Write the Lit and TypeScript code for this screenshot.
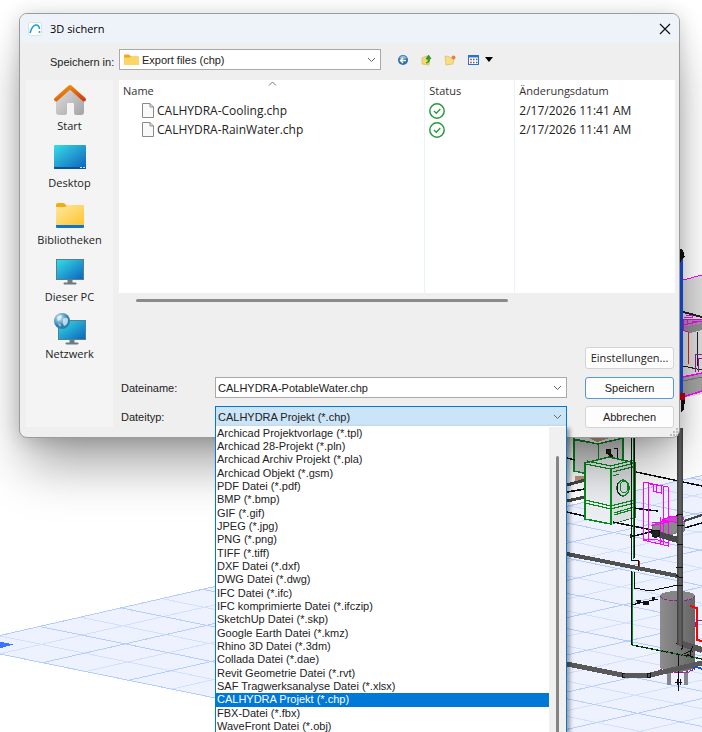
import { LitElement, html, svg, css } from "lit";
import { customElement, state } from "lit/decorators.js";

const FILE_TYPES = [
  "Archicad Projektvorlage (*.tpl)",
  "Archicad 28-Projekt (*.pln)",
  "Archicad Archiv Projekt (*.pla)",
  "Archicad Objekt (*.gsm)",
  "PDF Datei (*.pdf)",
  "BMP (*.bmp)",
  "GIF (*.gif)",
  "JPEG (*.jpg)",
  "PNG (*.png)",
  "TIFF (*.tiff)",
  "DXF Datei (*.dxf)",
  "DWG Datei (*.dwg)",
  "IFC Datei (*.ifc)",
  "IFC komprimierte Datei (*.ifczip)",
  "SketchUp Datei (*.skp)",
  "Google Earth Datei (*.kmz)",
  "Rhino 3D Datei (*.3dm)",
  "Collada Datei (*.dae)",
  "Revit Geometrie Datei (*.rvt)",
  "SAF Tragwerksanalyse Datei (*.xlsx)",
  "CALHYDRA Projekt (*.chp)",
  "FBX-Datei (*.fbx)",
  "WaveFront Datei (*.obj)",
];

const FILES = [
  { name: "CALHYDRA-Cooling.chp", date: "2/17/2026 11:41 AM" },
  { name: "CALHYDRA-RainWater.chp", date: "2/17/2026 11:41 AM" },
];

/* 3D view behind the dialog: floor grid and piping */
@customElement("model-view")
export class ModelView extends LitElement {
  static styles = css`
    :host { display: block; }
    .canvas { display: block; width: 100%; height: 100%; }
  `;

  private grid() {
    const top = (x: number) => 635.5 - 0.228 * x;
    const bottom = (x: number) => 653.8 + 0.205 * x;
    const lines = [];
    for (let i = 0; i < 19; i++) {
      const x = -1 + 40.7 * i;
      lines.push({ strong: i % 2 === 1, d: `M${x} ${top(x)}L${x + 800} ${top(x) + 0.204 * 800}` });
    }
    for (let i = 0; i < 28; i++) {
      const x = 43 * i;
      lines.push({ strong: i % 2 === 1, d: `M${x} ${bottom(x)}L${x + 800} ${bottom(x) - 0.228 * 800}` });
    }
    return [...lines.filter((l) => !l.strong), ...lines.filter((l) => l.strong)].map(
      (l) => svg`<path d=${l.d} stroke=${l.strong ? "#b4cdfb" : "#d3dffb"}/>`
    );
  }

  render() {
    return html`<svg class="canvas" viewBox="0 0 702 732" preserveAspectRatio="xMinYMin slice" fill="none" shape-rendering="crispEdges" aria-hidden="true">
      <defs>
        <linearGradient id="tank" x1="0" x2="1"><stop offset="0" stop-color="#8d8d8d"/><stop offset=".35" stop-color="#808080"/><stop offset="1" stop-color="#666"/></linearGradient>
        <linearGradient id="pipe" x1="0" x2="1"><stop offset="0" stop-color="#3e3e3e"/><stop offset=".5" stop-color="#666"/><stop offset="1" stop-color="#404040"/></linearGradient>
      </defs>
      <path d="M-44 645.5L702 475.5V797Z" fill="#eef2fe"/>
      <clipPath id="floor"><path d="M-45 645.5L702 475V798Z"/></clipPath>
      <g clip-path="url(#floor)">${this.grid()}</g>
      <path d="M-44 645.5L702 475.5M-44 645L702 797.5" stroke="#b4cdfb"/>
      <path d="M0 642h4v1h5v1h4v1h-3v1h-4v1h-3v1h-3z" fill="#3d74ff"/>

      <!-- upper right fixtures -->
      <path d="M683 280L702 275V394L683 398Z" fill="#dcdcdc"/>
      <path d="M683 280L702 275" stroke="#f0f"/>
      <path d="M683 312L702 317" stroke="#222" stroke-width="2"/>
      <path d="M683 320L702 319V327L690 333L683 330Z" fill="#c77ac7" stroke="#c218c2"/>
      <path d="M684 317h8v-2h-6M687 320v4M692 321l10 1M683 325l19-4" stroke="#c2c"/>
      <path d="M683 327L702 323V330L690 333Z" fill="#8e8e8e"/>
      <path d="M688.500 333V364" stroke="#c22"/>
      <path d="M697.500 332V366M683 366L702 370" stroke="#222"/>
      <path d="M695.500 372V354H702M698.500 372V358H702" stroke="#8b1f8b"/>
      <path d="M683 377L702 373V391L683 398Z" fill="#a3a3a3"/>
      <path d="M683 377L702 373M683 397L702 391" stroke="#f0f" stroke-width="1.500"/>
      <path d="M683 381L702 377" stroke="#777"/>
      <rect x="680" y="256" width="3" height="138" fill="#1852e6"/>
      <path d="M680 249l3 1 1 4 1 3-3 2-2 4zM681 400h4l-1 9-3 4z" fill="#111"/>
      <rect x="680" y="393" width="5" height="7" fill="#c00014"/>

      <!-- appliances -->
      <path d="M574 439L598 444L623 438V470L598 476L574 471Z" fill="#d2d2d2" stroke="#078a1f" stroke-width="1.500"/>
      <path d="M585 436L598 432L612 437L597 442Z" fill="#c2a58c"/>
      <path d="M598 444V476M574 440L598 444L623 438" stroke="#078a1f"/>
      <path d="M575 476h9v5h-9z" fill="#bd9878"/>
      <path d="M606 449h4v3l3 5h-2l-3-4h-2z" stroke="#111" fill="#222"/>
      <path d="M614 448H617.500V459" stroke="#111"/>
      <path d="M567 458L575 460M567 492L585 489M567 512L584 516M584.500 478V516" stroke="#111" stroke-width="1.500"/>
      <path d="M567 485L585 480M567 501L585 497" stroke="#444" stroke-width="3"/>
      <path d="M585 463L609 457L635 463V517L611 524L585 519Z" fill="#eceef1" stroke="#078a1f" stroke-width="1.500"/>
      <path d="M611 469L635 463V517L611 524Z" fill="#dcdee2"/>
      <path d="M585 464L611 469L635 463M587 461L611 466L634 460M611 469V524M585 500L611 506L635 500M585 503L611 509L635 503M613 472L633 467M613 476l6-2M614 515L631 510M614 513L634 507" stroke="#078a1f" stroke-width="1.200"/>
      <ellipse cx="623" cy="488" rx="6" ry="8" stroke="#078a1f" stroke-width="1.500"/>
      <ellipse cx="624" cy="487" rx="4" ry="6" stroke="#078a1f"/>
      <path d="M618 483l-1 8 4 5" stroke="#111"/>

      <!-- supply lines -->
      <path d="M636 472L702 486M613 522L652 530M634 508L648 510L658 511M634 536L654 531M684 528L702 523" stroke="#111" stroke-width="1.500"/>
      <path d="M684 521L702 515" stroke="#444" stroke-width="2.500"/>
      <path d="M631.500 438V560H638V571M634.500 438V558M631.500 571V645" stroke="#111"/>
      <path d="M633 438V559M632.500 572V645" stroke="#078a1f"/>
      <path d="M639.500 561V568" stroke="#c22"/>
      <path d="M567 554L678 576" stroke="#505050" stroke-width="4"/>
      <path d="M652 525L669 519L684 522V531L665 536L652 533Z" fill="#8a8a8a" stroke="#777"/>
      <path d="M643 482L668 487V546L643 540ZM648.500 482V542M663.500 486V545M643 540L655 539L668 543M653 484l8 2v7l-8-2zM656 485v7l5 1M650 484h5M660 517V545M652 523L684 519M651 526L680 519L684 522" stroke="#f0f"/>
      <path d="M662 520L672 516L684 518L680 523Z" fill="#c94ac9" stroke="#f0f"/>
      <path d="M654 533L678 540" stroke="#484848" stroke-width="6"/>
      <path d="M651 532l3-2h5l1 5-4 3-4-2M630 534l4 2-4 2" stroke="#111" fill="#222"/>

      <!-- tank -->
      <path d="M660 597V668Q677 676 695 668V597Z" fill="url(#tank)"/>
      <ellipse cx="677.500" cy="596" rx="17.500" ry="5" fill="#858585"/>
      <path d="M660 596Q663 601 677 601T695 596M660 669Q677 677 695 669" stroke="#a0149a" stroke-dasharray="4 1"/>
      <path d="M667 673h4v12h-4zM684 673h4v12h-4z" fill="#858590"/>
      <path d="M666 672h6M683 672h6" stroke="#8b3f98"/>
      <path d="M678.500 655V691M675 682h7M677 679v6M680 679v6" stroke="#111"/>
      <path d="M690 606L697 608V640L702 641" stroke="#f00" stroke-width="2"/>
      <path d="M702 620h-4l-3 4v3" stroke="#8b1f8b"/>
      <path d="M634.500 572V588L650 591L678 585M631 605L658 599" stroke="#111"/>
      <path d="M636 600h5l-2 4zM643 601h5l1 3-6 1zM652 597h3l-2 4z" fill="#111" stroke="#111"/>
      <path d="M632 645L702 659" stroke="#111" stroke-width="1.500"/>
      <path d="M632 645L702 659" stroke="#078a1f" stroke-dasharray="4 3"/>
      <path d="M567 664L622 675H650L702 663" stroke="#595959" stroke-width="5"/>
      <path d="M625 673h-3v4h3M647 673h3v4h-3zM684 654l6-3v5l-3-2" stroke="#111"/>
      <path d="M680 643L702 650" stroke="#555" stroke-width="6"/>
      <path d="M676 643h5l2 4-2 3M693 646l-2 4 2 2" stroke="#111"/>
      <path d="M693 668l4-1 5 2" stroke="#1652d8" stroke-width="2"/>
      <rect x="677" y="428" width="6" height="217" fill="url(#pipe)"/>
      <path d="M676 516l3-2 4 1M684 525l-7 1M677 545l6-1M676 567l7 1M676 575l3 2h4M677 585h6" stroke="#111"/>
    </svg>`;
  }
}

const chevron = html`<svg class="chevron" viewBox="0 0 9 6" aria-hidden="true"><path d="M1 1L4.500 4.500L8 1" fill="none" stroke="#666"/></svg>`;

const folder = svg`
  <path d="M0 1.500Q0 .5 1 .5H5L7 2.500H14Q15 2.500 15 3.500V10Q15 11 14 11H1Q0 11 0 10Z" fill="#eea91c"/>
  <path d="M0 4.500Q0 3.500 1 3.500H5.500L7.500 2.500H14Q15 2.500 15 3.500V10Q15 11 14 11H1Q0 11 0 10Z" fill="#fdd466"/>`;

const PLACES = [
  {
    label: "Start",
    icon: svg`<defs><linearGradient id="wall" x2="1" y2="1"><stop stop-color="#e2e2e2"/><stop offset="1" stop-color="#a3a3a3"/></linearGradient><linearGradient id="roof" x2="1" y2="1"><stop stop-color="#f59a11"/><stop offset="1" stop-color="#d43c08"/></linearGradient></defs>
      <path d="M2 15L16 2L30 15V28Q30 31 27 31H22Q20 31 20 29V20Q20 19 19 19H14Q13 19 13 20V29Q13 31 11 31H5Q2 31 2 28Z" fill="url(#wall)"/>
      <path d="M2 15.500L16 3L30 15.500" fill="none" stroke="url(#roof)" stroke-width="4" stroke-linecap="round" stroke-linejoin="round"/>`,
  },
  {
    label: "Desktop",
    icon: svg`<defs><linearGradient id="screen" x2="1" y2="1"><stop stop-color="#36dfe6"/><stop offset=".5" stop-color="#239dd2"/><stop offset="1" stop-color="#0b63bd"/></linearGradient></defs>
      <rect y="4" width="32" height="24" rx="1" fill="url(#screen)"/><path d="M0 26H32V27Q32 28 31 28H1Q0 28 0 27Z" fill="#0a5495"/><path d="M26 26.500h2m1 0h2" stroke="#cfe4f5"/>`,
  },
  {
    label: "Bibliotheken",
    icon: svg`<defs><linearGradient id="lib" x2="1" y2="1"><stop stop-color="#ffe8a0"/><stop offset="1" stop-color="#fdc52e"/></linearGradient></defs>
      <path d="M2 7Q2 5 4 5H10L13 8H29Q30 8 30 9V14H2Z" fill="#f0ab16"/><path d="M2 9H11L14 7H29Q30 7 30 8V27H2Z" fill="url(#lib)"/><path d="M2 27H30V29Q30 30 29 30H3Q2 30 2 29Z" fill="#0f74cf"/>`,
  },
  {
    label: "Dieser PC",
    icon: svg`<defs><linearGradient id="pc" x2="1" y2="1"><stop stop-color="#36dfe6"/><stop offset="1" stop-color="#0b63bd"/></linearGradient></defs>
      <path d="M14 24H18V28H22V29H10V28H14Z" fill="#6d7a84" stroke="#6d7a84"/><rect x="2.500" y="4.500" width="27" height="20" fill="url(#pc)" stroke="#57808f"/>`,
  },
  {
    label: "Netzwerk",
    icon: svg`<defs><linearGradient id="net" x2="1" y2="1"><stop stop-color="#36dfe6"/><stop offset="1" stop-color="#0b63bd"/></linearGradient><radialGradient id="globe" cx=".35" cy=".3"><stop stop-color="#d5ecf6"/><stop offset="1" stop-color="#2b7fae"/></radialGradient></defs>
      <path d="M16 28H20V31H24V32H12V31H16Z" fill="#6d7a84" stroke="#6d7a84"/><rect x="4.500" y="8.500" width="27" height="19" fill="url(#net)" stroke="#57808f"/>
      <circle cx="8" cy="9" r="8" fill="url(#globe)"/><path d="M3 5Q6 2 8 4Q7 8 4 9ZM9 7Q14 4 14 8Q14 13 10 14Q8 11 9 7ZM4 11l3 2-1 2Z" fill="#e6f3f8" opacity=".75"/>`,
  },
];

@customElement("app-root")
export class AppRoot extends LitElement {
  @state() private fileType = "CALHYDRA Projekt (*.chp)";
  @state() private fileName = "CALHYDRA-PotableWater.chp";

  static styles = css`
    :host {
      display: block;
      position: relative;
      box-sizing: border-box;
      height: 100vh;
      padding: 13px 22px 0 19px;
      overflow: hidden;
      background: #fff;
      color: #222;
      font: 12px/16px "Open Sans", "Noto Sans", sans-serif;
    }
    * { box-sizing: border-box; }
    button, input, select { font: inherit; color: inherit; margin: 0; }
    button { padding: 0; border: 0; background: none; }
    svg { display: block; flex: none; }
    .scene { position: absolute; inset: 0; }
    .dialog {
      position: relative;
      border: 1px solid #9b9b9b;
      border-radius: 8px;
      background: #efefef;
      box-shadow: 0 34px 48px -8px rgba(0, 0, 0, 0.36), 0 2px 20px rgba(0, 0, 0, 0.18);
    }
    .titlebar {
      display: flex;
      align-items: center;
      gap: 8px;
      height: 29px;
      padding: 0 8px;
      border-radius: 7px 7px 0 0;
      background: #eef3fa;
    }
    .title { flex: 1; margin: 0; font-size: 11px; font-weight: 400; color: #000; }
    .toolbar { display: flex; align-items: center; height: 37px; padding: 0 5px 4px 30px; }
    .plain { font-family: "Liberation Sans", Arial, sans-serif; font-size: 11px; }
    .toolbar label { width: 69px; padding-top: 4px; }
    .combo {
      position: relative;
      display: flex;
      align-items: center;
      height: 21px;
      border: 1px solid #a9a9a9;
      background: #fff;
    }
    .combo select, .combo input {
      flex: 1;
      min-width: 0;
      height: 100%;
      padding: 0 20px 0 2px;
      border: 0;
      border-radius: 0;
      outline: 0;
      background: transparent;
      appearance: none;
    }
    .chevron { position: absolute; right: 4px; width: 9px; height: 6px; pointer-events: none; }
    .location { flex: 0 1 262px; padding-left: 4px; gap: 1px; }
    .tools { display: flex; align-items: center; gap: 11px; padding-left: 16px; }
    .tool { display: flex; align-items: center; gap: 6px; }
    .body { display: flex; gap: 6px; padding: 0 4px 10px 6px; }
    .places { flex: 0 0 87px; display: flex; flex-direction: column; background: #f4f4f4; font-size: 11px; }
    .place { display: flex; flex-direction: column; align-items: center; gap: 2px; height: 57px; padding-top: 4px; }
    .place svg { overflow: visible; }
    .main { flex: 1; min-width: 0; }
    .files { width: 100%; height: 213px; border-collapse: collapse; table-layout: fixed; background: #fff; }
    .files th, .files td { height: 19px; padding: 0 0 0 4px; text-align: left; font-weight: 400; border-right: 1px solid #eaf2fa; white-space: nowrap; }
    .files th { height: 21px; color: #333; font-size: 11px; }
    .files th:last-child, .files td:last-child { border-right: 0; }
    .files .rest td { height: auto; }
    .name { width: 55%; }
    .status { width: 90px; }
    .sort { position: absolute; left: 48%; top: -2px; width: 9px; height: 5px; }
    .sorted { position: relative; }
    .file { display: flex; align-items: center; gap: 3px; padding-left: 19px; }
    .hscroll { height: 54px; padding: 6px 0 0 17px; }
    .hthumb { width: 69%; height: 3px; border-radius: 2px; background: #8a8a8a; }
    .form { display: grid; grid-template-columns: 94px 1fr 89px; grid-template-rows: 22px 21px 21px; row-gap: 8px; padding: 0 1px 0 2px; align-items: center; }
    .form .combo { margin-right: 18px; }
    .settings { grid-column: 3; font-size: 11px; }
    .btn { height: 22px; border: 1px solid #d4d4d4; border-radius: 3px; background: #fdfdfd; }
    .default { border-color: #5599d8; }
    .type { border-color: #0078d7; background: #cce4f7; }
    .menu {
      position: absolute;
      z-index: 1;
      top: 100%;
      left: -1px;
      right: -1px;
      display: flex;
      margin: 0;
      padding-top: 1px;
      border: 1px solid #0078d7;
      border-top-width: 0;
      background: #fff;
      box-shadow: 3px 2px 4px rgba(0, 0, 0, 0.35);
    }
    .options { flex: 1; margin: 0; padding: 0 0 8px; list-style: none; }
    .option { height: 13px; padding-left: 1px; line-height: 13px; white-space: nowrap; }
    .option:nth-child(3n) { height: 14px; }
    .selected { background: #0078d7; color: #fff; }
    .vscroll { flex: 0 0 17px; padding: 29px 0 0 7px; background: #f0f0f0; }
    .vthumb { width: 3px; height: 100%; border-radius: 2px 2px 0 0; background: #858585; }
    .grip { position: absolute; right: 1px; bottom: 1px; }
  `;

  render() {
    return html`
      <model-view class="scene"></model-view>
      <section class="dialog" role="dialog" aria-labelledby="title">
        <header class="titlebar">
          <svg width="14" height="14" viewBox="0 0 14 14" aria-hidden="true"><rect x=".5" y=".5" width="13" height="13" rx="2" fill="#fff" stroke="#dde1e6"/><path d="M2 11Q4 4 7.500 3Q11 2.500 11.500 7" fill="none" stroke="#16a0dc" stroke-width="1.600"/><circle cx="11.500" cy="10" r="1" fill="#16a0dc"/></svg>
          <h1 class="title" id="title">3D sichern</h1>
          <button aria-label="Schließen"><svg width="12" height="12" viewBox="0 0 12 12"><path d="M1 1L11 11M11 1L1 11" stroke="#111" stroke-width="1.200"/></svg></button>
        </header>

        <div class="toolbar">
          <label class="plain" for="location">Speichern in:</label>
          <div class="combo location plain">
            <svg width="15" height="12" viewBox="0 0 15 12" aria-hidden="true">${folder}</svg>
            <select id="location"><option>Export files (chp)</option></select>
            ${chevron}
          </div>
          <div class="tools">
            <button class="tool" aria-label="Zurück"><svg width="12" height="12" viewBox="0 0 12 12"><circle cx="6" cy="6" r="5" fill="#2c6fae"/><path d="M2 4Q6 -1 10 4Q6 6 2 4Z" fill="#8fbbe0"/><path d="M9 6.500H4M6 4L3.500 6.500L6 9" fill="none" stroke="#fff" stroke-width="1.500"/></svg></button>
            <button class="tool" aria-label="Nach oben"><svg width="13" height="12" viewBox="0 0 13 12"><path d="M2 4L6 2L10 4L9 11L2 10Z" fill="#f2da73" stroke="#d3b24a" stroke-width=".600"/><path d="M6 9Q9 8 8 5H6L8.500 1L11 4.500H9.500Q10 9 6 9Z" fill="#2da52d" stroke="#177b1d" stroke-width=".600"/></svg></button>
            <button class="tool" aria-label="Neuer Ordner"><svg width="13" height="12" viewBox="0 0 13 12"><path d="M1 2L5 2.500L6 4L10 3.500L9 10L2 11Z" fill="#f8de83" stroke="#dcb24a" stroke-width=".600"/><circle cx="9.500" cy="3.500" r="2" fill="#f27a43"/></svg></button>
            <button class="tool" aria-label="Ansicht"><svg width="11" height="10" viewBox="0 0 11 10"><rect x=".5" y=".5" width="10" height="9" fill="#fff" stroke="#2a72d5"/><path d="M0 1.500H11" stroke="#2a72d5" stroke-width="2"/><path d="M2 4.500h2M2 7.500h2" stroke="#d35f4b" stroke-width="1.500"/><path d="M5 4.500h1.500M5 7.500h1.500M8 4.500h1.500M8 7.500h1.500" stroke="#35659b" stroke-width="1.500"/></svg><svg width="8" height="5" viewBox="0 0 8 5"><path d="M0 0H8L4 5Z" fill="#000"/></svg></button>
          </div>
        </div>

        <div class="body">
          <nav class="places">
            ${PLACES.map((p) => html`<button class="place"><svg width="32" height="32" viewBox="0 0 32 32" aria-hidden="true">${p.icon}</svg>${p.label}</button>`)}
          </nav>
          <div class="main">
            <table class="files">
              <thead>
                <tr>
                  <th class="name"><div class="sorted">Name<svg class="sort" viewBox="0 0 9 5" aria-hidden="true"><path d="M1 4.500L4.500 1L8 4.500" fill="none" stroke="#777"/></svg></div></th>
                  <th class="status">Status</th>
                  <th>Änderungsdatum</th>
                </tr>
              </thead>
              <tbody>
                ${FILES.map((f) => html`<tr>
                  <td><div class="file"><svg width="12" height="15" viewBox="0 0 12 15" aria-hidden="true"><path d="M.5 .5H8L11.500 4V14.500H.5Z" fill="#f9f9f9" stroke="#8a8a8a"/><path d="M8 .5V4H11.500" fill="none" stroke="#8a8a8a"/></svg>${f.name}</div></td>
                  <td><svg width="16" height="16" viewBox="0 0 16 16" role="img" aria-label="Verfügbar"><circle cx="8" cy="8" r="7.200" fill="#fff" stroke="#279a41" stroke-width="1.500"/><path d="M5 8L7.300 10.300L11.300 6" fill="none" stroke="#279a41" stroke-width="1.300"/></svg></td>
                  <td>${f.date}</td>
                </tr>`)}
                <tr class="rest"><td></td><td></td><td></td></tr>
              </tbody>
            </table>
            <div class="hscroll"><div class="hthumb"></div></div>
            <form class="form" @submit=${(e: Event) => e.preventDefault()}>
              <button class="btn settings" type="button">Einstellungen...</button>
              <label class="plain" for="name">Dateiname:</label>
              <div class="combo plain">
                <input id="name" .value=${this.fileName} @input=${(e: Event) => (this.fileName = (e.target as HTMLInputElement).value)} />
                ${chevron}
              </div>
              <button class="btn default plain">Speichern</button>
              <label class="plain" for="type">Dateityp:</label>
              <div class="combo type plain">
                <select id="type" @change=${(e: Event) => (this.fileType = (e.target as HTMLSelectElement).value)}>
                  ${FILE_TYPES.map((t) => html`<option ?selected=${t === this.fileType}>${t}</option>`)}
                </select>
                ${chevron}
                <div class="menu">
                  <ul class="options" role="listbox" aria-label="Dateityp">
                    ${FILE_TYPES.map((t) => html`<li class="option ${t === this.fileType ? "selected" : ""}" role="option" aria-selected=${t === this.fileType} @click=${() => (this.fileType = t)}>${t}</li>`)}
                  </ul>
                  <div class="vscroll"><div class="vthumb"></div></div>
                </div>
              </div>
              <button class="btn plain" type="button">Abbrechen</button>
            </form>
          </div>
        </div>
        <svg class="grip" width="8" height="8" viewBox="0 0 8 8" aria-hidden="true"><path d="M6 0h2v2H6zM3 3h2v2H3zM6 3h2v2H6zM0 6h2v2H0zM3 6h2v2H3zM6 6h2v2H6z" fill="#bcbcbc"/></svg>
      </section>
    `;
  }
}
